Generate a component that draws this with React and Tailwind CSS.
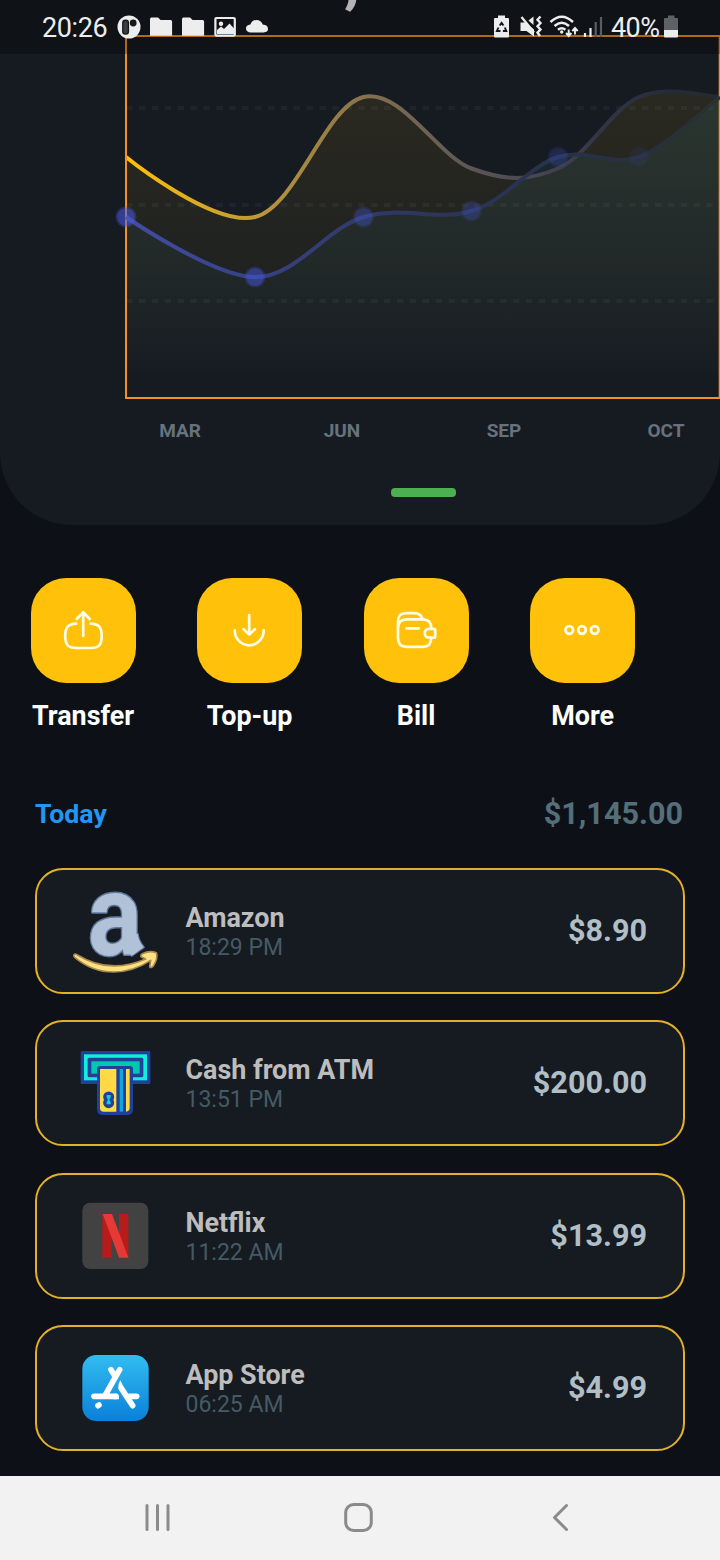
const xs = [126, 255, 363.5, 471.5, 558, 639, 720];
const income = [157, 217, 97, 168.5, 168.5, 97, 97];
const spending = [217, 277, 217, 211, 157, 157, 97];

// Cubic spline through the points with a fixed smoothness.
function curve(ys) {
  let d = `M${xs[0]} ${ys[0]}`;
  let px = 0;
  let py = 0;
  for (let i = 1; i < xs.length; i++) {
    const n = Math.min(i + 1, xs.length - 1);
    const tx = ((xs[n] - xs[i - 1]) / 2) * 0.35;
    const ty = ((ys[n] - ys[i - 1]) / 2) * 0.35;
    d += ` C${xs[i - 1] + px} ${ys[i - 1] + py} ${xs[i] - tx} ${ys[i] - ty} ${xs[i]} ${ys[i]}`;
    px = tx;
    py = ty;
  }
  return d;
}

function Chart() {
  const a = curve(income);
  const b = curve(spending);
  return (
    <svg width="720" height="410" viewBox="0 0 720 410" fill="none" className="block">
      <defs>
        <linearGradient id="incomeLine" gradientUnits="userSpaceOnUse" x1="126" y1="0" x2="720" y2="0">
          <stop offset="0" stopColor="#ffc107" />
          <stop offset="0.22" stopColor="#bd983a" />
          <stop offset="0.42" stopColor="#806e50" />
          <stop offset="0.62" stopColor="#555056" />
          <stop offset="0.8" stopColor="#323547" />
          <stop offset="0.92" stopColor="#262a38" />
          <stop offset="1" stopColor="#262a2c" />
        </linearGradient>
        <linearGradient id="spendLine" gradientUnits="userSpaceOnUse" x1="126" y1="0" x2="720" y2="0">
          <stop offset="0" stopColor="#414da6" />
          <stop offset="0.22" stopColor="#374183" />
          <stop offset="0.5" stopColor="#2d365c" />
          <stop offset="0.75" stopColor="#27314a" />
          <stop offset="0.9" stopColor="#273039" />
          <stop offset="1" stopColor="#283232" />
        </linearGradient>
        <linearGradient id="incomeFill" gradientUnits="userSpaceOnUse" x1="0" y1="92" x2="0" y2="380">
          <stop offset="0" stopColor="#ffc107" stopOpacity="0.085" />
          <stop offset="0.6" stopColor="#ffc107" stopOpacity="0.045" />
          <stop offset="1" stopColor="#ffc107" stopOpacity="0" />
        </linearGradient>
        <linearGradient id="spendFill" gradientUnits="userSpaceOnUse" x1="0" y1="97" x2="0" y2="380">
          <stop offset="0" stopColor="#2f8796" stopOpacity="0.14" />
          <stop offset="0.6" stopColor="#2f8796" stopOpacity="0.06" />
          <stop offset="1" stopColor="#2f8796" stopOpacity="0" />
        </linearGradient>
      </defs>
      <path d={`${a} V398 H126 Z`} fill="url(#incomeFill)" />
      <path d={`${b} V398 H126 Z`} fill="url(#spendFill)" />
      <g stroke="#90a4ae" strokeOpacity="0.075" strokeWidth="4" strokeDasharray="6.4 6.5">
        <path d="M126 108H720M126 205H720M126 301H720" />
      </g>
      <path d={a} stroke="url(#incomeLine)" strokeWidth="4" />
      <path d="M126 36H719.700V398H126Z" stroke="#f5921f" strokeWidth="2" />
      <path d={b} stroke="url(#spendLine)" strokeWidth="4" />
      {[0.62, 0.54, 0.38, 0.3, 0.24, 0.1].map((o, i) => (
        <g key={i} fill="#4a5be8" opacity={o}>
          <circle cx={xs[i]} cy={spending[i]} r="10.5" opacity="0.45" />
          <circle cx={xs[i]} cy={spending[i]} r="8.7" opacity="0.8" />
        </g>
      ))}
    </svg>
  );
}

function StatusBar() {
  return (
    <div className="absolute inset-x-0 top-0 flex h-[54px] items-start bg-black/28 pl-[42px] text-[27px] leading-[54px] text-[#ededed]">
      <span className="w-[72px] pt-px tracking-[-0.4px]">20:26</span>
      <svg width="160" height="54" viewBox="114 0 160 54" fill="#ededed">
        <circle cx="129" cy="27" r="11.500" />
        <rect x="122.800" y="20.300" width="5.600" height="13.800" rx="2.600" fill="#3a3d40" stroke="#14181c" strokeWidth="1.400" />
        <circle cx="133.200" cy="23" r="3.400" fill="#14181c" />
        <path d="M150 19q0-1.500 1.500-1.500h6.500l2.600 2.500h10q1.500 0 1.500 1.500v14.200h-22.100z" />
        <path d="M182 19q0-1.500 1.500-1.500h6.500l2.600 2.500h10q1.500 0 1.500 1.500v14.200h-22.100z" />
        <rect x="215.400" y="18" width="19.400" height="17.600" rx="1" fill="none" stroke="#ededed" strokeWidth="2.200" />
        <circle cx="221" cy="23.800" r="2.200" />
        <path d="M217 34v-4l4-3.600 3 2.600 5.500-5.600 4.500 5v5.600z" />
        <path d="M251 32.500q-5-.3-5-4 0-3.500 4.400-3.900 1.300-4.600 6.100-4.600 4.600 0 6.200 4.600 5.300.4 5.300 4.500 0 3.200-4.400 3.400z" />
      </svg>
      <div className="ml-auto flex pr-[42px]">
        <svg width="116" height="54" viewBox="494 0 116 54" fill="#ededed">
          <path d="M498 15.500h7v2.500h3q1 0 1 1v17.500q0 1-1 1h-13q-1 0-1-1v-17.500q0-1 1-1h3z" />
          <path d="M499.700 25.500l1.900-2.700 1.900 2.700M504.800 27.500l1.500 3.500h-3.400M498.400 27.500l-1.500 3.500h3.600" fill="none" stroke="#14181c" strokeWidth="1.900" />
          <path d="M520.500 22.500h5l8.500 7v7l-7.500-5.500h-6zM528.500 20.500l5-4v8.500z" />
          <path d="M521.500 17l12.500 15.500" stroke="#ededed" strokeWidth="2.200" />
          <path d="M540.500 16.500l-3 3.300 3 3.200-3 3.300 3 3.200-3 3.200 2.500 3.300" fill="none" stroke="#ededed" strokeWidth="2.400" />
          <g fill="none" stroke="#ededed" strokeWidth="2.500">
            <path d="M550.500 22q11.200-10.500 22.500 0" />
            <path d="M554.500 26q7.300-6.500 14.500 0" />
            <path d="M558 29.700q3.700-3 7.400 0" />
          </g>
          <circle cx="561.700" cy="32" r="1.700" />
          <path d="M568.700 29.500v6M566 33l2.700 3 2.700-3M575 34.500v-6M572.300 31l2.700-3 2.700 3" fill="none" stroke="#ededed" strokeWidth="1.900" />
          <path d="M585 33v4M590.500 28v9" stroke="#ededed" strokeWidth="2.200" />
          <path d="M595.700 22v15M601 17v20" stroke="#5b5e61" strokeWidth="2.200" />
        </svg>
        <span className="w-[54px] pt-px pl-px tracking-[-0.6px]">40%</span>
        <svg width="14" height="54" viewBox="664 0 14 54">
          <path d="M668 15.500h6.500v2.500h2.500q1 0 1 1v11h-14v-11q0-1 1-1h3z" fill="#5f6264" />
          <path d="M664 30h14v6.500q0 1-1 1h-12q-1 0-1-1z" fill="#ededed" />
        </svg>
      </div>
    </div>
  );
}

const actions = [
  {
    label: "Transfer",
    icon: (
      <>
        <path d="M76 623.700C68 624 65 627 65 636c0 9 3 12 11 12h14.500c8 0 11-3 11-12 0-9-3-12-11-12.300" />
        <path d="M83 636v-23.500M76.500 619l6.500-6.700 6.500 6.700" />
      </>
    ),
  },
  {
    label: "Top-up",
    icon: (
      <>
        <path d="M68.500 630.300a14.500 15 0 0 0 29 0" />
        <path d="M83 615v19.500M77.400 629.300l5.600 5.300 5.600-5.300" />
      </>
    ),
  },
  {
    label: "Bill",
    icon: (
      <g transform="translate(-333 0)">
        <path d="M431 628c0-6-2.500-8.700-8.500-8.700h-16c-6 0-8.700 2.700-8.700 8.700v10c0 6 2.700 8.800 8.700 8.800h16c6 0 8.500-2.800 8.500-8.800" />
        <path d="M397.800 627v-5c0-6 2-8.800 8-8.800h8c5 0 7.500 2 8.300 6" />
        <path d="M433.500 628.900h-4.500c-6 0-6 8.800 0 8.800h4.500q1.500 0 1.500-1.500v-5.800q0-1.500-1.500-1.500z" />
        <path d="M406.500 628.300h12" />
      </g>
    ),
  },
  {
    label: "More",
    icon: (
      <>
        <circle cx="70.100" cy="630" r="3.800" />
        <circle cx="82.800" cy="630" r="3.800" />
        <circle cx="95.500" cy="630" r="3.800" />
      </>
    ),
  },
];

function AmazonLogo() {
  return (
    <svg width="90" height="90" viewBox="120 78 270 270">
      <defs>
        <clipPath id="foot">
          <path d="M120 78H390V236L341 262L304 288L290 310H120Z" />
        </clipPath>
      </defs>
      <path d="M300 225l23-3q1 18 18 40l-36 25q-12-10-22-25z" fill="#b0c1d8" stroke="#5e789b" strokeWidth="7" strokeLinejoin="round" />
      <g clipPath="url(#foot)">
        <text
          transform="translate(173 286) scale(0.88 1)"
          fontFamily="Roboto, 'Liberation Sans', sans-serif"
          fontWeight="700"
          fontSize="345"
          fill="#b0c1d8"
          stroke="#5e789b"
          strokeWidth="9"
          strokeLinejoin="round"
          paintOrder="stroke"
        >
          a
        </text>
      </g>
      <path d="M300 225l23-3q1 18 18 40l-36 25q-12-10-22-25z" fill="#b0c1d8" />
      <path
        d="M132 284q4-4 9 0c68 42 140 42 206 13l-14-7q-2-5 4-9 22-11 42-3 6 16-9 40-7 8-11 2l3-19C296 344 208 354 134 292q-4-4-2-8z"
        fill="#ffe082"
        stroke="#a88a4c"
        strokeWidth="5"
        strokeLinejoin="round"
      />
    </svg>
  );
}

function AtmIcon() {
  return (
    <svg width="90" height="90" viewBox="120 78 270 270">
      <rect x="152" y="117" width="209" height="99" rx="4" fill="#21409a" />
      <rect x="162" y="127" width="189" height="78" fill="#0ff0dc" />
      <rect x="173" y="137" width="167" height="59" rx="5" fill="#21409a" />
      <rect x="184" y="148" width="145" height="37" fill="#00c9b0" />
      <path d="M201 172q0-10 10-10h88q10 0 10 10v119q0 18-18 18h-72q-18 0-18-18z" fill="#21409a" />
      <path d="M210 171h49v128h-38q-11 0-11-11z" fill="#ffda44" />
      <rect x="269" y="171" width="10" height="128" fill="#0ea5e0" />
      <path d="M288 171h11v117q0 9-11 11z" fill="#ffda44" />
      <circle cx="236" cy="255" r="16.500" fill="#21409a" />
      <circle cx="236" cy="272" r="16.500" fill="#21409a" />
      <path d="M230 249h12v7l-4 7 4 7v7h-12v-7l4-7-4-7z" fill="#08cfe0" />
    </svg>
  );
}

function NetflixIcon() {
  return (
    <svg width="90" height="90" viewBox="120 78 270 270">
      <rect x="157" y="113" width="198" height="199" rx="23" fill="#424242" />
      <rect x="217" y="147" width="28" height="131" fill="#b71c1c" />
      <rect x="267" y="147" width="28" height="131" fill="#b71c1c" />
      <rect x="0" y="0" width="28" height="131" transform="translate(218 147) skewX(20.600)" fill="#e53935" />
    </svg>
  );
}

function AppStoreIcon() {
  return (
    <svg width="90" height="90" viewBox="120 75 270 270">
      <defs>
        <linearGradient id="store" x1="0" y1="0" x2="0" y2="1">
          <stop offset="0" stopColor="#32bdf0" />
          <stop offset="1" stopColor="#0a80da" />
        </linearGradient>
      </defs>
      <rect x="157" y="111" width="199" height="198" rx="42" fill="url(#store)" />
      <g stroke="#fff" strokeWidth="17" strokeLinecap="round" fill="none">
        <path d="M269 155l-43 76M243 155l12 20" />
        <path d="M192 235h66" />
        <path d="M298 235h22" />
        <path d="M274 211l34 52" />
        <path d="M204 263l3-2" />
      </g>
      <path d="M271 187q-9 14-4 29l14-8z" fill="#fff" />
      <path d="M250 227h12q6 8 5 17h-17z" fill="#fff" />
    </svg>
  );
}

const transactions = [
  { name: "Amazon", time: "18:29 PM", amount: "$8.90", Icon: AmazonLogo },
  { name: "Cash from ATM", time: "13:51 PM", amount: "$200.00", Icon: AtmIcon },
  { name: "Netflix", time: "11:22 AM", amount: "$13.99", Icon: NetflixIcon },
  { name: "App Store", time: "06:25 AM", amount: "$4.99", Icon: AppStoreIcon },
];

export default function App() {
  return (
    <div className="relative flex h-[1560px] w-[720px] flex-col overflow-hidden bg-[#0d1117] font-['Roboto',sans-serif]">
      <section className="h-[525px] shrink-0 rounded-b-[72px] bg-[#161b22]">
        <Chart />
        <div className="grid grid-cols-[repeat(4,162px)] pt-[10px] pl-[99px] text-center text-[19px] leading-[22px] font-bold text-[#67727d]">
          <span>MAR</span>
          <span>JUN</span>
          <span>SEP</span>
          <span>OCT</span>
        </div>
        <div className="mt-[46px] ml-[390.500px] h-[9px] w-[65px] rounded-[4px] bg-[#4caf50]" />
      </section>

      <span className="absolute top-[-55px] left-[344px] text-[66px] leading-[66px] font-bold text-[#fafafa]">,</span>
      <StatusBar />

      <nav className="mt-[53px] grid grid-cols-[repeat(4,166.500px)]">
        {actions.map((a) => (
          <div key={a.label} className="flex w-[166.200px] flex-col items-center">
            <div className="flex size-[105px] items-center justify-center rounded-[35px] bg-[#ffc10a]">
              <svg
                width="49"
                height="49"
                viewBox="58.800 606 49 49"
                fill="none"
                stroke="#fffde7"
                strokeWidth="2.700"
                strokeLinecap="round"
                strokeLinejoin="round"
              >
                {a.icon}
              </svg>
            </div>
            <span className="mt-[17px] text-[26.900px] leading-[32px] font-bold text-white">{a.label}</span>
          </div>
        ))}
      </nav>

      <div className="mt-[64px] flex h-[36px] items-center justify-between pr-[37px] pl-[35px] font-bold">
        <span className="text-[26.700px] text-[#2196f3]">Today</span>
        <span className="text-[30.600px] text-[#546e7a]">$1,145.00</span>
      </div>

      <ul className="mt-[36px] flex flex-col gap-[26.330px] px-[35px]">
        {transactions.map(({ name, time, amount, Icon }) => (
          <li
            key={name}
            className="flex h-[126px] items-center rounded-[28px] border-2 border-[#e3b02a] bg-[#161b22] pr-[36px] pl-[33px]"
          >
            <Icon />
            <div className="ml-[25.500px] flex flex-col pt-[3px]">
              <span className="text-[26.900px] leading-[30px] font-bold text-[#bdbdbd]">{name}</span>
              <span className="text-[23px] leading-[29px] text-[#455a64]">{time}</span>
            </div>
            <span className="ml-auto text-[30.600px] font-bold text-[#b0bec5]">{amount}</span>
          </li>
        ))}
      </ul>

      <footer className="mt-auto flex h-[84px] shrink-0 items-center bg-[#f2f2f2]">
        <svg width="720" height="84" viewBox="0 1476 720 84" fill="none" stroke="#8b8b8b" strokeWidth="3" strokeLinecap="round">
          <path d="M147 1505.500v24M157.500 1505.500v24M168 1505.500v24" />
          <rect x="345.700" y="1504.500" width="25.600" height="26" rx="8" />
          <path d="M566.500 1505.500l-12 12 12 12" strokeLinejoin="round" />
        </svg>
      </footer>
    </div>
  );
}
